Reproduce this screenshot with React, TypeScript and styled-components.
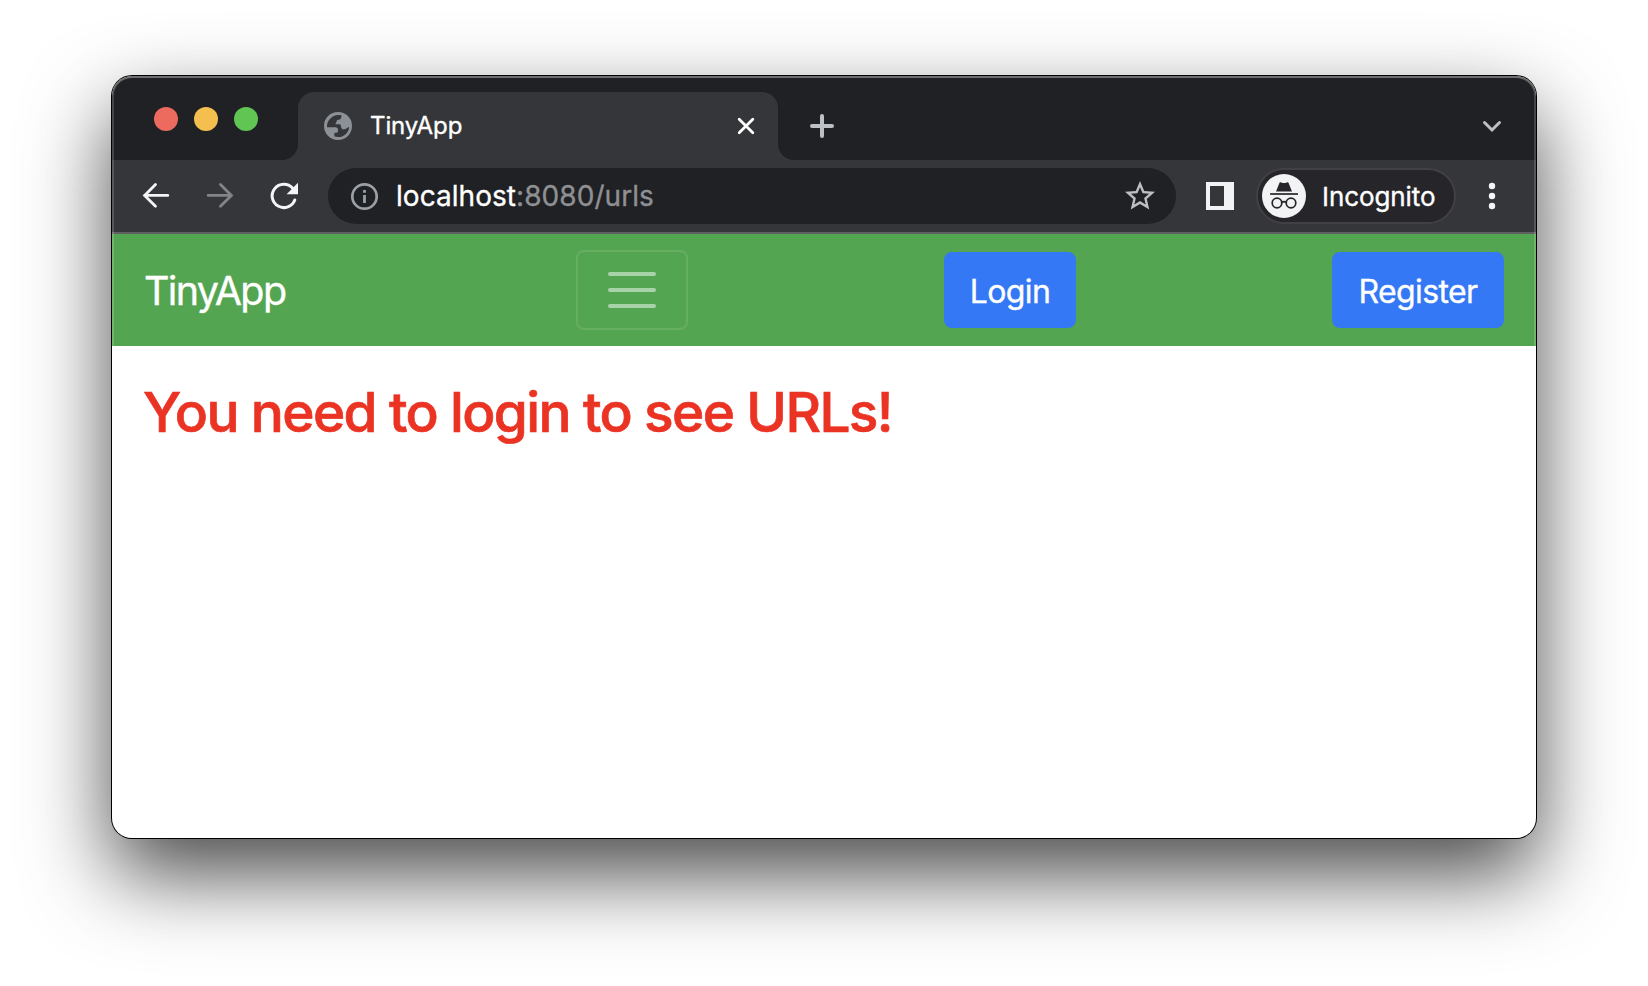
import React from "react";
import styled, { createGlobalStyle } from "styled-components";
import { MdStarBorder } from "react-icons/md";

const GlobalStyle = createGlobalStyle`
  *, *::before, *::after { box-sizing: border-box; }
  body {
    margin: 0;
    background: #fff;
    font-family: Inter, "Liberation Sans", sans-serif;
    font-weight: 400;
    -webkit-text-stroke: 0.35px currentColor;
    overflow: hidden;
  }
`;

const Desktop = styled.main`
  display: flex;
  justify-content: center;
  width: 1648px;
  height: 986px;
  padding-top: 76px;
`;

const BrowserWindow = styled.section`
  position: relative;
  display: flex;
  flex-direction: column;
  width: 1424px;
  height: 762px;
  border-radius: 20px;
  background: #fff;
  box-shadow: 0 0 0 1px #000, 0 36px 84px rgba(0, 0, 0, 0.72);

  &::after {
    content: "";
    position: absolute;
    inset: 0;
    border-radius: 20px;
    box-shadow: inset 0 0 0 2px rgba(255, 255, 255, 0.17),
      inset 0 2px 0 rgba(255, 255, 255, 0.22);
    pointer-events: none;
  }
`;

const TabStrip = styled.header`
  display: flex;
  align-items: flex-end;
  height: 84px;
  padding-right: 34px;
  border-radius: 20px 20px 0 0;
  background: #202124;
`;

const TrafficLights = styled.div`
  display: flex;
  align-items: center;
  gap: 16px;
  width: 186px;
  height: 82px;
  padding-left: 42px;
`;

const Light = styled.span<{ $color: string }>`
  width: 24px;
  height: 24px;
  border-radius: 50%;
  background: ${(p) => p.$color};
`;

const Tab = styled.div`
  position: relative;
  display: flex;
  align-items: center;
  width: 480px;
  height: 68px;
  padding: 0 22px 0 26px;
  border-radius: 16px 16px 0 0;
  background: #35363a;

  &::before,
  &::after {
    content: "";
    position: absolute;
    bottom: 0;
    width: 16px;
    height: 16px;
  }
  &::before {
    left: -16px;
    background: radial-gradient(circle at 0 0, transparent 15.6px, #35363a 16.4px);
  }
  &::after {
    right: -16px;
    background: radial-gradient(circle at 100% 0, transparent 15.6px, #35363a 16.4px);
  }
`;

const TabTitle = styled.span`
  flex: 1;
  margin-left: 18px;
  color: #fff;
  font-size: 24px;
  line-height: 30px;
  letter-spacing: -0.1px;
`;

const Glyph = styled.svg`
  display: block;
  flex: none;
  overflow: visible;
`;

const NewTab = styled.div`
  display: flex;
  flex: 1;
  align-items: center;
  height: 68px;
  padding-left: 32px;
`;

const TabSearch = styled.div`
  display: flex;
  align-items: center;
  height: 68px;
`;

const Toolbar = styled.div`
  display: flex;
  align-items: center;
  height: 74px;
  padding: 0 40px 2px 28px;
  border-bottom: 2px solid #606064;
  background: #35363a;
`;

const NavButtons = styled.div`
  display: flex;
  gap: 32px;
  width: 188px;
  padding-top: 2px;
`;

const AddressBar = styled.div`
  display: flex;
  align-items: center;
  width: 848px;
  height: 56px;
  padding: 0 18px 0 20px;
  border-radius: 28px;
  background: #202124;
  margin-top: 2px;
`;

const Address = styled.span`
  flex: 1;
  margin-left: 16px;
  color: #8f9093;
  font-size: 28px;
  line-height: 34px;
  letter-spacing: 0.05px;
`;

const Host = styled.span`
  color: #fff;
`;

const PanelIcon = styled.span`
  width: 28px;
  height: 28px;
  margin: 2px 22px 0 30px;
  border: solid #f1f3f4;
  border-width: 4px 10px 4px 4px;
`;

const Profile = styled.div`
  display: flex;
  align-items: center;
  width: 200px;
  height: 56px;
  margin-top: 2px;
  padding-left: 4px;
  border: 2px solid #404045;
  border-radius: 28px;
  background: #26262a;
`;

const ProfileName = styled.span`
  margin: 2px 0 0 16px;
  color: #fff;
  font-size: 26px;
  line-height: 32px;
  letter-spacing: -0.08px;
`;

const MenuIcon = styled(Glyph)`
  margin: 2px 0 0 32px;
`;

const Navbar = styled.nav`
  display: flex;
  align-items: center;
  justify-content: space-between;
  height: 112px;
  padding: 16px 32px;
  background: #54a551;
`;

const Brand = styled.a`
  width: 144px;
  margin-right: 32px;
  padding-top: 2px;
  color: #fff;
  font-size: 39.5px;
  line-height: 60px;
  letter-spacing: -1.65px;
  white-space: nowrap;
`;

const Toggler = styled.button`
  display: flex;
  flex-direction: column;
  align-items: center;
  justify-content: center;
  gap: 12px;
  width: 112px;
  height: 80px;
  padding: 0;
  border: 2px solid rgba(255, 255, 255, 0.1);
  border-radius: 8px;
  background: transparent;
`;

const TogglerBar = styled.span`
  width: 48px;
  height: 4px;
  border-radius: 2px;
  background: rgba(255, 255, 255, 0.5);
`;

const NavButton = styled.button<{ $width: number }>`
  width: ${(p) => p.$width}px;
  height: 76px;
  padding: 3px 0 0;
  border: 0;
  border-radius: 8px;
  background: #3478f6;
  color: #fff;
  font-family: inherit;
  font-size: 32px;
  font-weight: inherit;
  line-height: 48px;
  letter-spacing: -0.62px;
`;

const Content = styled.div`
  padding: 33px 31px;
`;

const Message = styled.h1`
  margin: 0;
  color: #eb3323;
  font-size: 55px;
  font-weight: 500;
  line-height: 67px;
  letter-spacing: -1.65px;
  white-space: nowrap;
  -webkit-text-stroke: 0.7px currentColor;
`;

const GlobeIcon = () => (
  <Glyph width="28" height="28" viewBox="0 0 28 28">
    <circle cx="14" cy="14" r="14" fill="#8b9196" />
    <path
      d="M3 15.300C2.600 8.500 8 2.800 14.500 2.900L17.500 3.300C17.500 6 16.500 7.800 14.500 7.800C12.800 7.800 12.600 9 12.400 10L11.300 12.300H15.200C16.800 12.300 17 13.400 17.100 15C17.300 17 19 17.800 20.800 17.300C22.500 17 22.800 15 25.200 14.900C24.800 20.500 20 25.400 13.800 25L10.400 24.400V20.700H12.200C14 20.700 14 19.300 14 18.400C14 16.600 13.500 15.300 11.500 15.300Z"
      fill="#35363a"
    />
  </Glyph>
);

const IncognitoIcon = () => (
  <Glyph width="44" height="44" viewBox="0 0 44 44">
    <circle cx="22" cy="22" r="22" fill="#f1f3f4" />
    <path d="M17.500 8.800C18 8.200 18.500 8.200 19.200 8.500Q22 9.500 24.800 8.500C25.500 8.200 26 8.200 26.500 8.800L30 17.600H14Z" fill="#26262a" />
    <path d="M8 20H36" stroke="#26262a" strokeWidth="1.700" />
    <g fill="none" stroke="#26262a" strokeWidth="1.700">
      <circle cx="15" cy="29" r="4.800" />
      <circle cx="29" cy="29" r="4.800" />
      <path d="M19.800 28.500Q22 26.800 24.200 28.500" />
    </g>
  </Glyph>
);

export default function App() {
  return (
    <>
      <GlobalStyle />
      <Desktop>
        <BrowserWindow>
          <TabStrip>
            <TrafficLights>
              <Light $color="#ed6a5e" />
              <Light $color="#f5bf4f" />
              <Light $color="#61c554" />
            </TrafficLights>
            <Tab>
              <GlobeIcon />
              <TabTitle>TinyApp</TabTitle>
              <Glyph width="20" height="20" viewBox="0 0 20 20" stroke="#fff" strokeWidth="2.800" strokeLinecap="round">
                <path d="M3.200 3.200L16.800 16.800M16.800 3.200L3.200 16.800" />
              </Glyph>
            </Tab>
            <NewTab>
              <Glyph width="24" height="24" viewBox="0 0 24 24" stroke="#bdc1c6" strokeWidth="4" strokeLinecap="round">
                <path d="M12 2V22M2 12H22" />
              </Glyph>
            </NewTab>
            <TabSearch>
              <Glyph width="20" height="12" viewBox="0 0 20 12" fill="none" stroke="#bdc1c6" strokeWidth="3" strokeLinecap="round">
                <path d="M2.500 2.500L10 10L17.500 2.500" />
              </Glyph>
            </TabSearch>
          </TabStrip>
          <Toolbar>
            <NavButtons>
              <Glyph width="32" height="32" viewBox="0 0 32 32" fill="none" stroke="#f4f5f6" strokeWidth="2.800" strokeLinecap="round">
                <path d="M15.500 4.500L4.600 15.400L15.500 26.300M4.600 15.400H27.800" />
              </Glyph>
              <Glyph width="32" height="32" viewBox="0 0 32 32" fill="none" stroke="#838487" strokeWidth="2.800" strokeLinecap="round">
                <path d="M16.500 4.500L27.400 15.400L16.500 26.300M27.400 15.400H4.200" />
              </Glyph>
              <Glyph width="32" height="32" viewBox="0 0 32 32" fill="none" stroke="#f4f5f6" strokeWidth="3" strokeLinecap="round">
                <path d="M26.800 20A11.700 11.700 0 1 1 24.500 8" />
                <path d="M30 2.800V14.200H18.600Z" fill="#f4f5f6" stroke="none" />
              </Glyph>
            </NavButtons>
            <AddressBar>
              <Glyph width="32" height="32" viewBox="0 0 32 32">
                <circle cx="16.500" cy="16.500" r="12.200" fill="none" stroke="#9aa0a6" strokeWidth="2.700" />
                <path d="M15.100 10H17.900V12.800H15.100ZM15.100 15H17.900V23H15.100Z" fill="#9aa0a6" />
              </Glyph>
              <Address>
                <Host>localhost</Host>:8080/urls
              </Address>
              <MdStarBorder size={36} color="#bdbec0" />
            </AddressBar>
            <PanelIcon />
            <Profile>
              <IncognitoIcon />
              <ProfileName>Incognito</ProfileName>
            </Profile>
            <MenuIcon width="8" height="28" viewBox="0 0 8 28" fill="#f4f5f6">
              <circle cx="4" cy="4" r="3.200" />
              <circle cx="4" cy="14" r="3.200" />
              <circle cx="4" cy="24" r="3.200" />
            </MenuIcon>
          </Toolbar>
          <Navbar>
            <Brand>TinyApp</Brand>
            <Toggler aria-label="Toggle navigation">
              <TogglerBar />
              <TogglerBar />
              <TogglerBar />
            </Toggler>
            <NavButton $width={132}>Login</NavButton>
            <NavButton $width={172}>Register</NavButton>
          </Navbar>
          <Content>
            <Message>You need to login to see URLs!</Message>
          </Content>
        </BrowserWindow>
      </Desktop>
    </>
  );
}
